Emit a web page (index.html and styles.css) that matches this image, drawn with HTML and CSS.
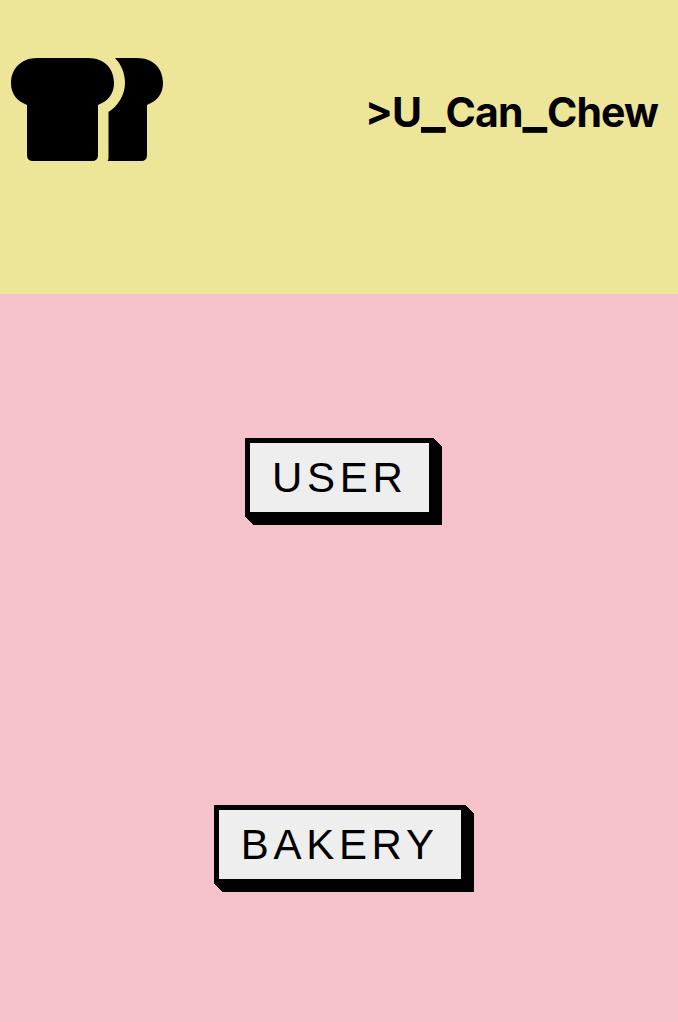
FILE: index.html
```
<!DOCTYPE html>
<html lang="en">
<head>
<meta charset="utf-8">
<title>U Can Chew</title>
<link rel="stylesheet" href="styles.css">
</head>
<body>
<header class="header">
<svg class="logo" viewBox="0 0 154 105" aria-hidden="true">
<path d="M27 1H78C95 1 104 12 104 26C104 37 98 44 88 48V98Q88 104 82 104H23Q17 104 17 98V48C7 44 1 37 1 26C1 12 11 1 27 1Z"/>
<path d="M105 1H127C144 1 153 12 153 26C153 37 147 44 137 48V98Q137 104 131 104H97.500Q98.500 103 98.500 101V55C108 49 115 38 115 26C115 16 111 7 105 1Z"/>
</svg>
<h1 class="title"><span class="prompt">&gt;</span>U<span class="underscore">_</span>Can<span class="underscore">_</span>Chew</h1>
</header>
<main class="choices">
<section class="choice"><button class="button">USER</button></section>
<section class="choice"><button class="button">BAKERY</button></section>
</main>
</body>
</html>
```
FILE: styles.css
```
* { box-sizing: border-box; }
body { margin: 0; height: 1022px; background: #f5c2cb; font-family: Inter, sans-serif; color: #000; }
.header { height: 294px; padding: 57px 20px 0 10px; background: #ede698; display: flex; justify-content: space-between; align-items: flex-start; }
.logo { width: 154px; height: 105px; }
.title { margin: 26px 0 0; font-size: 41px; line-height: 50px; font-weight: 700; letter-spacing: -0.9px; white-space: nowrap; }
.prompt { position: relative; top: -2px; }
.underscore { display: inline-block; width: 24.5px; font-size: 52px; line-height: 1; letter-spacing: 0; height: 50px; vertical-align: baseline; }
.choices { display: grid; grid-template-rows: 367px 367px; padding-left: 1.4px; }
.choice { display: flex; justify-content: center; align-items: center; }
.button { height: 79px; padding: 0 22px 0 22px; border: 5px solid #000; background: #eee; color: #000; font: 42px/1 "Liberation Sans", sans-serif; letter-spacing: 4.7px; box-shadow: 1px 1px #000, 2px 2px #000, 3px 3px #000, 4px 4px #000, 5px 5px #000, 6px 6px #000, 7px 7px #000, 8px 8px #000; }
```
